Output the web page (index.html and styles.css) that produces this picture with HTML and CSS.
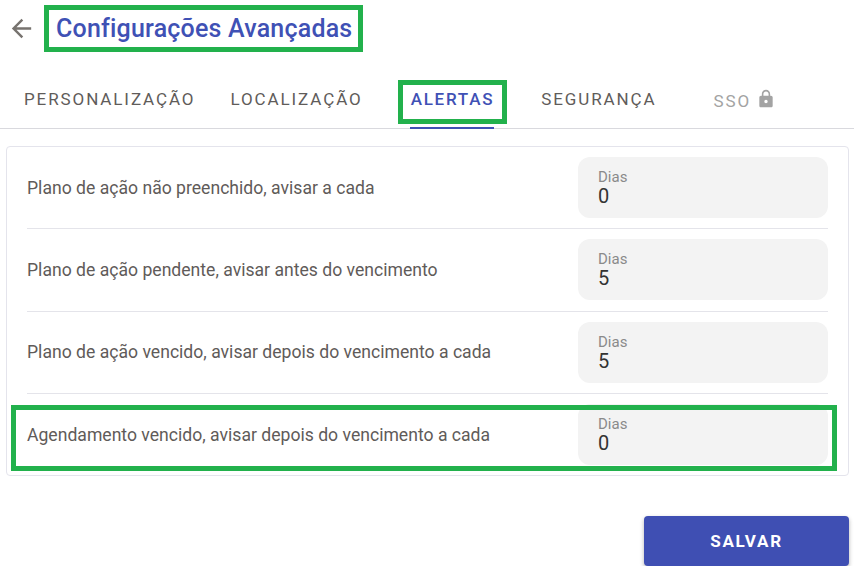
FILE: index.html
```html
<!DOCTYPE html>
<html lang="pt-BR">
<head>
  <meta charset="UTF-8" />
  <title>Configurações Avançadas</title>
  <link rel="stylesheet" href="styles.css">
</head>
<body>
  <header class="page-header">
    <svg class="back-arrow" viewBox="0 0 24 24" width="29" height="29">
      <path d="M20 11H7.83l5.59-5.59L12 4l-8 8 8 8 1.41-1.41L7.83 13H20v-2z"/>
    </svg>
    <h1 class="page-title">Configurações Avançadas</h1>
  </header>

  <nav class="tabs">
    <a class="tab tab-first">PERSONALIZAÇÃO</a>
    <a class="tab tab-second">LOCALIZAÇÃO</a>
    <a class="tab tab-active">ALERTAS</a>
    <a class="tab tab-fourth">SEGURANÇA</a>
    <a class="tab tab-disabled">SSO
      <svg viewBox="0 0 24 24" width="20" height="20">
        <path d="M18 8h-1V6c0-2.76-2.24-5-5-5S7 3.24 7 6v2H6c-1.1 0-2 .9-2 2v10c0 1.1.9 2 2 2h12c1.1 0 2-.9 2-2V10c0-1.1-.9-2-2-2zm-6 9c-1.1 0-2-.9-2-2s.9-2 2-2 2 .9 2 2-.9 2-2 2zm3.1-9H8.9V6c0-1.71 1.39-3.1 3.1-3.1 1.71 0 3.1 1.39 3.1 3.1v2z"/>
      </svg>
    </a>
  </nav>

  <section class="card">
    <div class="row">
      <span class="row-label">Plano de ação não preenchido, avisar a cada</span>
      <div class="field"><label>Dias</label><span class="field-value">0</span></div>
    </div>
    <div class="row">
      <span class="row-label">Plano de ação pendente, avisar antes do vencimento</span>
      <div class="field"><label>Dias</label><span class="field-value">5</span></div>
    </div>
    <div class="row">
      <span class="row-label">Plano de ação vencido, avisar depois do vencimento a cada</span>
      <div class="field"><label>Dias</label><span class="field-value">5</span></div>
    </div>
    <div class="row row-last">
      <span class="row-label">Agendamento vencido, avisar depois do vencimento a cada</span>
      <div class="field"><label>Dias</label><span class="field-value">0</span></div>
      <div class="highlight"></div>
    </div>
  </section>

  <div class="actions">
    <button class="btn-save">SALVAR</button>
  </div>
</body>
</html>
```

FILE: styles.css
```css
*, *::before, *::after {
  box-sizing: border-box;
}

body {
  margin: 0;
  background: #fff;
  font-family: Roboto, "Liberation Sans", sans-serif;
  color: #5f5b59;
  overflow: hidden;
}

.page-header {
  display: flex;
  align-items: center;
  height: 58px;
  padding: 5px 0 6px 7px;
}

.back-arrow {
  fill: #77736f;
  margin-right: 8px;
}

.page-title {
  margin: 0;
  padding: 5px 6px 4px 7px;
  border: 5px solid #22b14c;
  font-size: 25px;
  font-weight: 500;
  line-height: 28px;
  letter-spacing: 0.2px;
  color: #3f51b5;
}

.tabs {
  display: flex;
  height: 71px;
  padding-top: 22px;
  border-bottom: 1px solid #d9d9de;
}

.tab {
  display: flex;
  align-items: center;
  height: 48px;
  font-size: 17px;
  font-weight: 400;
  letter-spacing: 1.9px;
  color: #5f5c5a;
  padding-bottom: 10px;
}

.tab-first {
  margin-left: 24px;
}

.tab-second {
  margin-left: 35px;
}

.tab-active {
  position: relative;
  margin-left: 48px;
  font-weight: 500;
  letter-spacing: 1.75px;
  color: #3f51b5;
}

/* green box from the annotated screenshot */
.tab-active::before {
  content: "";
  position: absolute;
  left: -13px;
  right: -13px;
  top: 0;
  height: 44px;
  border: 5px solid #22b14c;
}

.tab-active::after {
  content: "";
  position: absolute;
  left: -1px;
  right: 0;
  bottom: -1px;
  height: 2px;
  background: #3f51b5;
}

.tab-fourth {
  margin-left: 47px;
}

.tab-disabled {
  margin-left: 57px;
  color: #a3a3a3;
  padding-bottom: 6px;
}

.tab-disabled svg {
  fill: #a3a3a3;
  margin: -4px 0 0 5px;
}

.card {
  margin: 17px 5px 0 6px;
  height: 330px;
  padding: 0 20px;
  border: 1px solid #e4e4ec;
  border-radius: 4px;
}

.row {
  position: relative;
  display: flex;
  align-items: flex-start;
  justify-content: space-between;
  height: 82.33px;
  padding-top: 10px;
  border-bottom: 1px solid #e4e4ea;
}

.row-last {
  border-bottom: none;
}

.row-label {
  padding-top: 20.6px;
  font-size: 17.6px;
  line-height: 20px;
}

.field {
  display: flex;
  flex-direction: column;
  width: 250px;
  height: 61px;
  padding: 12px 20px 0;
  border-radius: 12px;
  background: #f3f3f3;
}

.field label {
  font-size: 15px;
  line-height: 16px;
  color: #8a8a8a;
}

.field-value {
  font-size: 20px;
  line-height: 23px;
  color: #333;
}

.highlight {
  position: absolute;
  left: -16px;
  right: -9px;
  top: 11px;
  bottom: 5px;
  border: 5px solid #22b14c;
}

.actions {
  display: flex;
  justify-content: flex-end;
  margin-top: 40px;
  padding-right: 5px;
}

.btn-save {
  width: 205px;
  height: 50px;
  border: none;
  border-radius: 4px;
  background: #3f4fb3;
  color: #fff;
  font-family: inherit;
  font-size: 17px;
  font-weight: 700;
  letter-spacing: 1.7px;
  box-shadow: 0 2px 4px rgba(0,0,0,0.3);
}
```
